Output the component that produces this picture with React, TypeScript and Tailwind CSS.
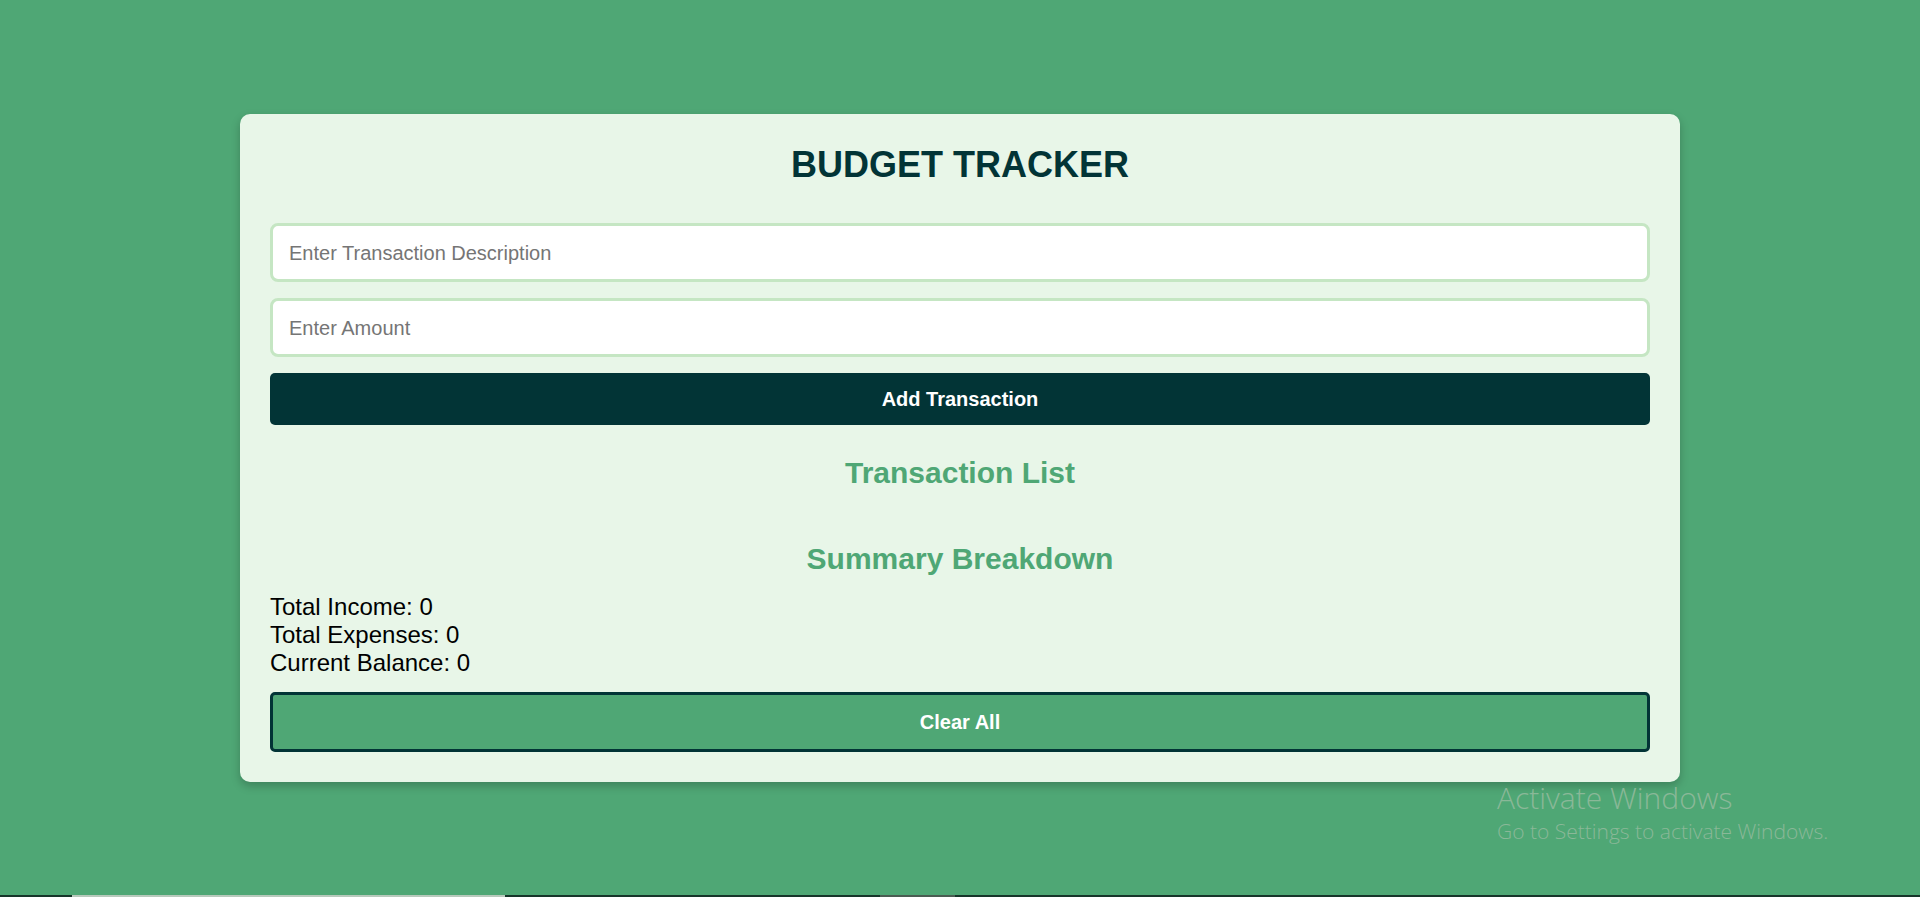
import React, { useState } from 'react';

type Transaction = { id: number; description: string; amount: number };

export default function App() {
  const [description, setDescription] = useState('');
  const [amount, setAmount] = useState('');
  const [transactions, setTransactions] = useState<Transaction[]>([]);

  const income = transactions.filter(t => t.amount > 0).reduce((s, t) => s + t.amount, 0);
  const expenses = transactions.filter(t => t.amount < 0).reduce((s, t) => s + Math.abs(t.amount), 0);
  const balance = income - expenses;

  const addTransaction = () => {
    const value = parseFloat(amount);
    if (!description.trim() || isNaN(value)) return;
    setTransactions([...transactions, { id: Date.now(), description, amount: value }]);
    setDescription('');
    setAmount('');
  };

  return (
    <div className="relative min-h-[897px] bg-[#4fa775] pt-[114px] font-['Liberation_Sans',Arial,sans-serif]">
      {/* Card */}
      <div className="mx-auto w-[1440px] rounded-[10px] bg-[#e8f6e8] px-[30px] pt-[30px] pb-[30px] shadow-[0_4px_10px_rgba(0,0,0,0.22)]">
        <h1 className="text-center text-[36px] leading-[41px] font-bold text-[#023436]">BUDGET TRACKER</h1>

        {/* Form */}
        <div className="mt-[38px] flex flex-col gap-[16px]">
          <input
            value={description}
            onChange={e => setDescription(e.target.value)}
            placeholder="Enter Transaction Description"
            className="h-[59px] w-full rounded-[8px] border-[3px] border-[#c5e6c3] bg-white px-[16px] pt-[2px] text-[20px] text-black outline-none placeholder:text-[#757575]"
          />
          <input
            value={amount}
            onChange={e => setAmount(e.target.value)}
            placeholder="Enter Amount"
            className="h-[59px] w-full rounded-[8px] border-[3px] border-[#c5e6c3] bg-white px-[16px] pt-[2px] text-[20px] text-black outline-none placeholder:text-[#757575]"
          />
          <button
            onClick={addTransaction}
            className="h-[52px] w-full rounded-[5px] bg-[#023436] text-[20px] font-bold text-white"
          >
            Add Transaction
          </button>
        </div>

        <h2 className="mt-[30px] text-center text-[30px] leading-[35px] font-bold text-[#4fa775]">Transaction List</h2>
        <ul>
          {transactions.map(t => (
            <li key={t.id} className="text-[20px]">
              {t.description}: {t.amount}
            </li>
          ))}
        </ul>

        <h2 className="mt-[51px] text-center text-[30px] leading-[35px] font-bold text-[#4fa775]">Summary Breakdown</h2>
        <div className="mt-[17px] text-[24px] leading-[28px] text-black">
          <p>Total Income: {income}</p>
          <p>Total Expenses: {expenses}</p>
          <p>Current Balance: {balance}</p>
        </div>

        <button
          onClick={() => setTransactions([])}
          className="mt-[15px] h-[60px] w-full rounded-[5px] border-[3px] border-[#023436] bg-[#4fa775] text-[20px] font-bold text-white"
        >
          Clear All
        </button>
      </div>

      {/* Windows watermark */}
      <div className="absolute left-[1497px] top-[780px] font-['Open_Sans',sans-serif] font-light text-[#8ab898]">
        <p className="text-[30px] leading-[36px]">Activate Windows</p>
        <p className="text-[21px] leading-[30px]">Go to Settings to activate Windows.</p>
      </div>

      {/* taskbar edge */}
      <div className="absolute bottom-0 left-0 flex h-[2px] w-full bg-[#17352a]">
        <div className="ml-[72px] w-[433px] bg-[#b8c9bc]" />
        <div className="ml-[375px] w-[75px] bg-[#4a5d52]" />
      </div>
    </div>
  );
}
